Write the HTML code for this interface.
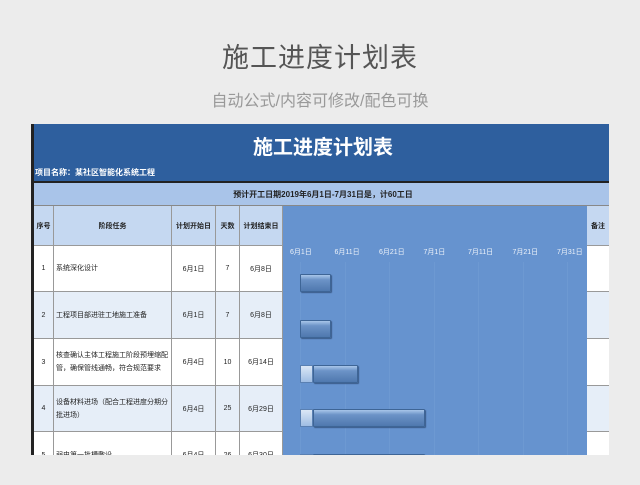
<!DOCTYPE html><html><head><meta charset="utf-8"><style>
*{margin:0;padding:0;box-sizing:border-box}
body{width:640px;height:485px;background:#ececec;font-family:"Liberation Sans","Noto Sans CJK SC",sans-serif;position:relative;overflow:hidden}
.a{position:absolute}
.t{left:0;width:640px;text-align:center}
.c{position:absolute;display:flex;align-items:center;justify-content:center;font-size:7px;color:#222;border-right:1px solid #999;border-bottom:1px solid #999;text-align:center}
.bar{position:absolute;height:18px;background:linear-gradient(#a9c6ea,#6c93c7 30%,#4f78ae);border:1px solid #3e6596;border-radius:1px;box-shadow:1px 1px 1px #3a5a88}
.pale{position:absolute;height:18px;width:13px;background:linear-gradient(#dbe7f6,#9fbde3);border:1px solid #5a80b2}
.d{position:absolute;top:247px;font-size:7px;color:#eef3fa}
</style></head><body>
<div class="a t" style="top:36px;font-size:27px;color:#555;letter-spacing:1px">施工进度计划表</div>
<div class="a t" style="top:87px;font-size:16px;color:#999">自动公式/内容可修改/配色可换</div>
<div class="a" style="left:31px;top:124px;width:578px;height:331px;background:#fff;border-left:3px solid #222;overflow:hidden">
 <div class="a" style="left:0;top:0;width:578px;height:57px;background:#2e5f9e"></div>
 <div class="a" style="left:0;top:7px;width:578px;text-align:center;color:#fff;font-size:20px;font-weight:bold">施工进度计划表</div>
 <div class="a" style="left:1px;top:43px;color:#fff;font-size:8px;font-weight:bold">项目名称：某社区智能化系统工程</div>
 <div class="a" style="left:0;top:57px;width:578px;height:2px;background:#222"></div>
 <div class="a" style="left:0;top:59px;width:578px;height:23px;background:#a9c4e9;border-bottom:1px solid #888;display:flex;align-items:center;justify-content:center;font-size:8px;font-weight:bold;color:#222">预计开工日期2019年6月1日-7月31日是，计60工日</div>
 <div class="a" style="left:249px;top:82px;width:304px;height:260px;background:#6693cf"></div>
</div>
<div id="g"></div>
<script>
var cols=[[34,54],[54,172],[172,216],[216,240],[240,283]];
var hd=["序号","阶段任务","计划开始日","天数","计划结束日"];
var rows=[["1","系统深化设计","6月1日","7","6月8日"],["2","工程项目部进驻工地施工准备","6月1日","7","6月8日"],["3","核查确认主体工程施工阶段预埋缩配管，确保管线通畅，符合规范要求","6月4日","10","6月14日"],["4","设备材料进场（配合工程进度分期分批进场）","6月4日","25","6月29日"],["5","弱电第一批槽敷设","6月4日","26","6月30日"]];
var ys=[246,292,339,386,432,479];var h="";
cols.forEach(function(c,i){h+='<div class="c" style="left:'+c[0]+'px;top:206px;width:'+(c[1]-c[0])+'px;height:40px;background:#c5d8f1;font-weight:bold">'+hd[i]+'</div>';});
h+='<div class="c" style="left:587px;top:206px;width:22px;height:40px;background:#c5d8f1;font-weight:bold;border-right:none">备注</div>';
rows.forEach(function(r,j){var bg=j%2?"#e6eef8":"#fff";var y=ys[j],hh=ys[j+1]-y;
cols.forEach(function(c,i){h+='<div class="c" style="left:'+c[0]+'px;top:'+y+'px;width:'+(c[1]-c[0])+'px;height:'+hh+'px;background:'+bg+';'+(i==1?'justify-content:flex-start;text-align:left;padding:0 2px;line-height:13px':'')+'">'+r[i]+'</div>';});
h+='<div class="c" style="left:587px;top:'+y+'px;width:22px;height:'+hh+'px;background:'+bg+';border-right:none"></div>';});
var dl=["6月1日","6月11日","6月21日","7月1日","7月11日","7月21日","7月31日"];
dl.forEach(function(t,i){h+='<div class="d" style="left:'+(290+i*44.5)+'px">'+t+'</div>';});
for(var i=0;i<7;i++)h+='<div class="a" style="left:'+(300+i*44.5)+'px;top:262px;width:1px;height:193px;background:#6d99d2"></div>';
h+='<div class="bar" style="left:300px;top:274px;width:31px"></div>';
h+='<div class="bar" style="left:300px;top:320px;width:31px"></div>';
h+='<div class="pale" style="left:300px;top:365px"></div><div class="bar" style="left:313px;top:365px;width:45px"></div>';
h+='<div class="pale" style="left:300px;top:409px"></div><div class="bar" style="left:313px;top:409px;width:112px"></div>';
h+='<div class="pale" style="left:300px;top:454px"></div><div class="bar" style="left:313px;top:454px;width:112px"></div>';
h+='<div class="a" style="left:0;top:455px;width:640px;height:30px;background:#ececec"></div>';
document.getElementById("g").innerHTML=h;
</script>
</body></html>
